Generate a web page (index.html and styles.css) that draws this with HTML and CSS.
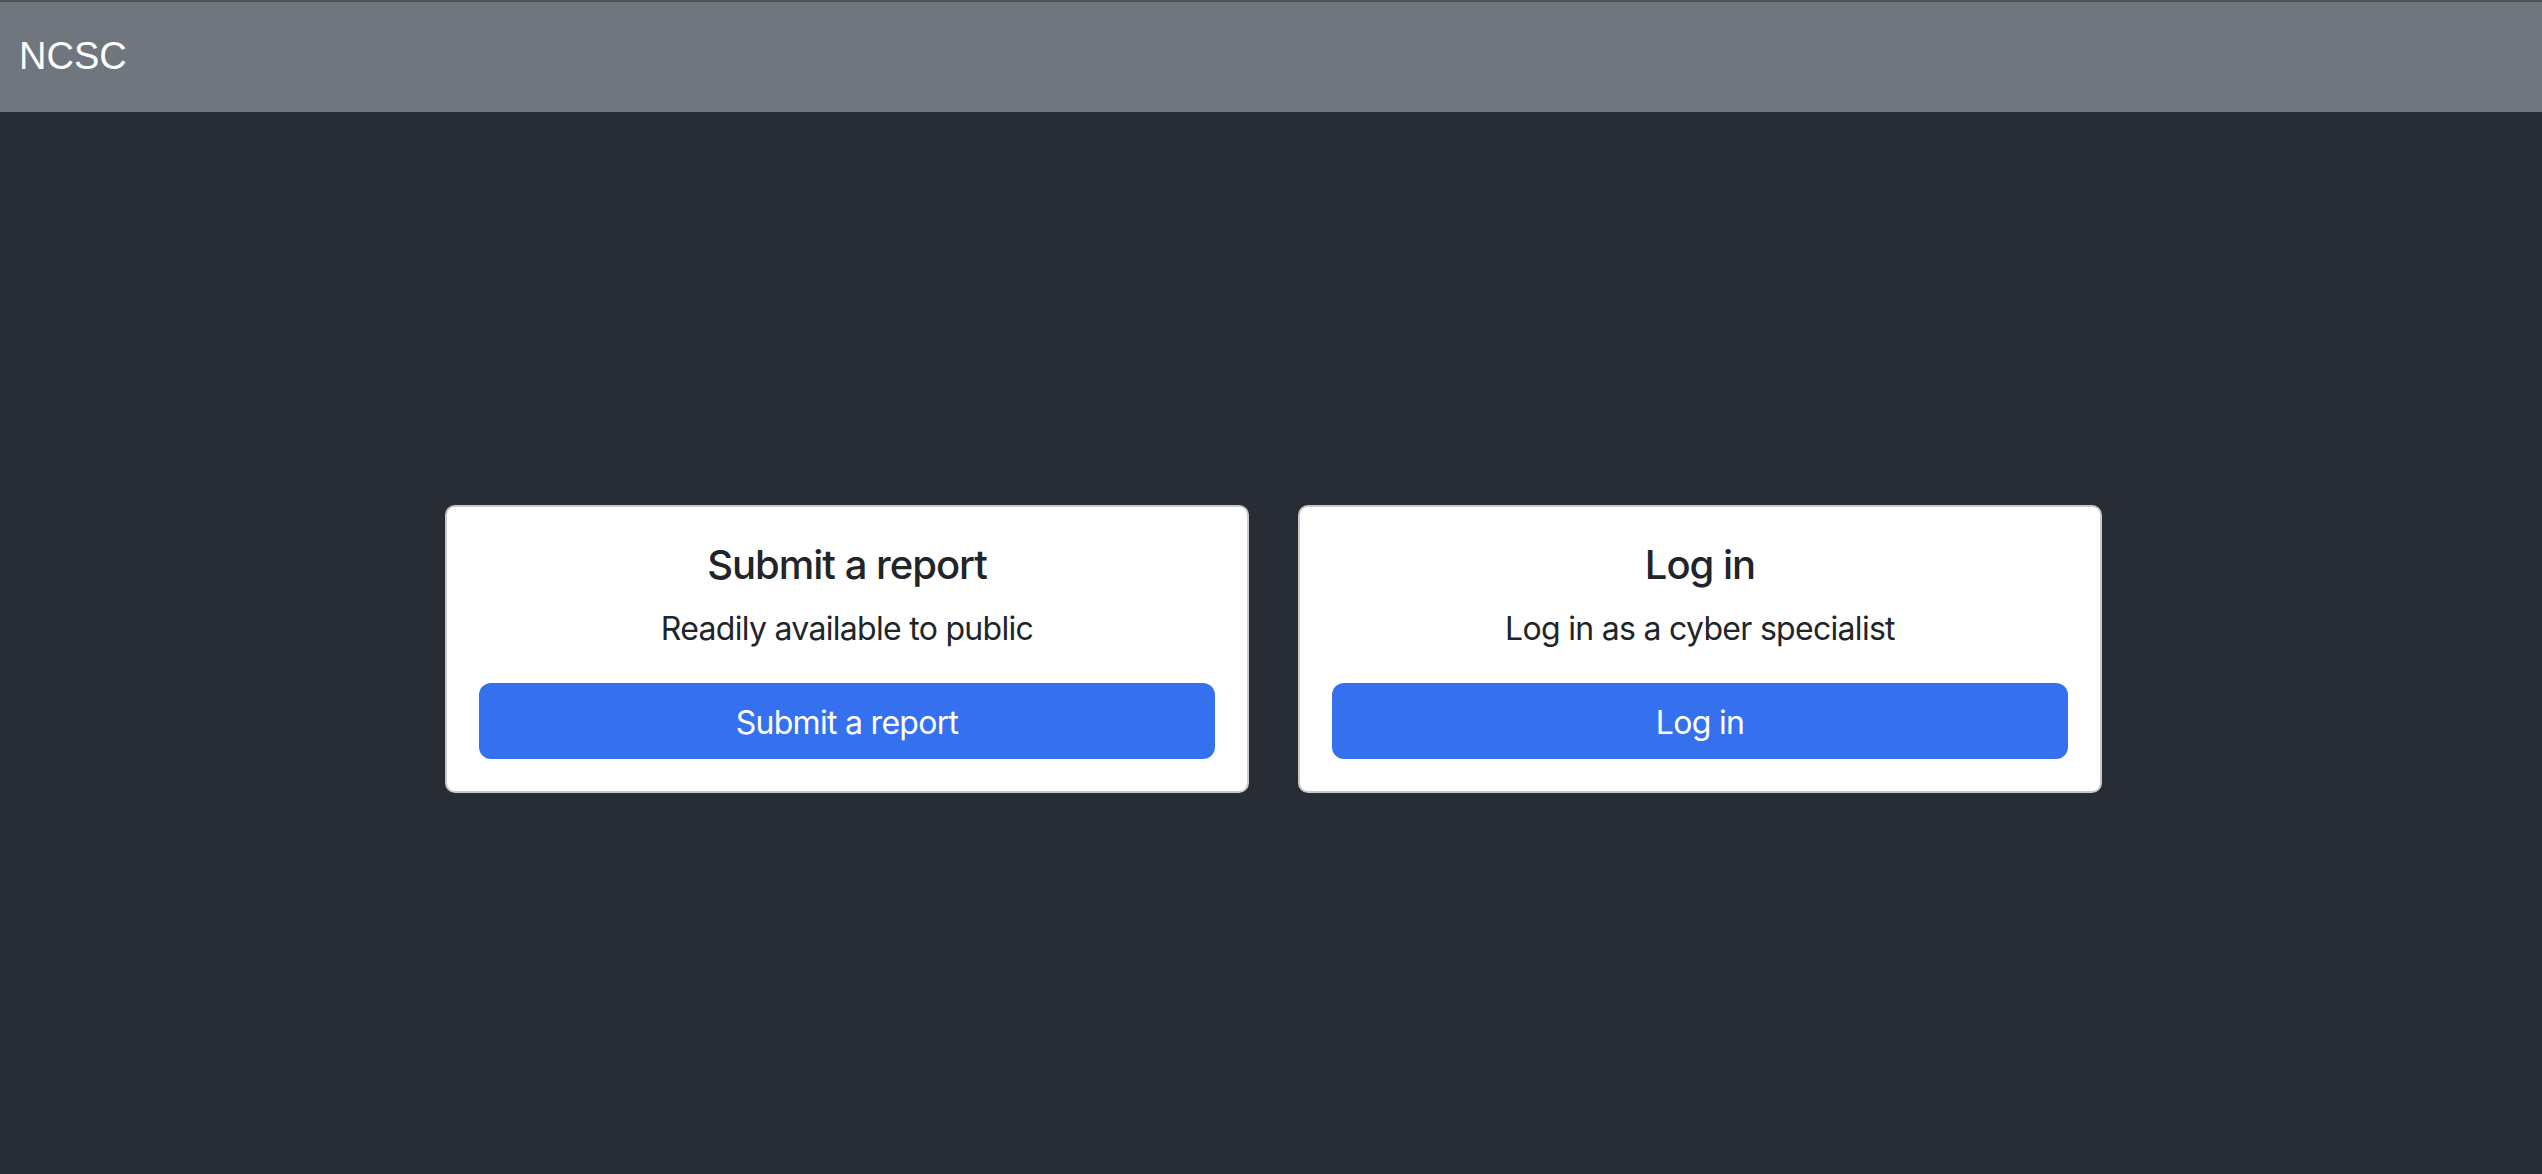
FILE: index.html
```html
<!DOCTYPE html>
<html lang="en">
<head>
<meta charset="utf-8">
<title>NCSC</title>
<link rel="stylesheet" href="styles.css">
</head>
<body>
<nav class="navbar">
  <span class="brand">NCSC</span>
</nav>
<main class="main">
  <div class="cards">
    <section class="card">
      <h5 class="card-title">Submit a report</h5>
      <p class="card-text">Readily available to public</p>
      <button class="btn">Submit a report</button>
    </section>
    <section class="card">
      <h5 class="card-title">Log in</h5>
      <p class="card-text">Log in as a cyber specialist</p>
      <button class="btn">Log in</button>
    </section>
  </div>
</main>
</body>
</html>
```
FILE: styles.css
```css
* { box-sizing: border-box; }
html, body { margin: 0; padding: 0; }
body {
  background: #282c34;
  min-height: 100vh;
  font-family: Inter, "Noto Sans", "Liberation Sans", sans-serif;
  color: #212529;
}
.navbar {
  height: 112px;
  background: #6f767e;
  border-top: 2px solid #4d5259;
  display: flex;
  align-items: center;
  padding: 0 19px;
}
.brand {
  font-family: "Liberation Sans", Arial, sans-serif;
  font-size: 38px;
  color: #ffffff;
  line-height: 1.2;
}
.main {
  padding-top: 393px;
}
.cards {
  display: flex;
  justify-content: center;
  gap: 49px;
  padding-left: 5px;
}
.card {
  width: 804px;
  background: #ffffff;
  border: 2px solid #c9cacc;
  border-radius: 10px;
  padding: 32px;
  text-align: center;
}
.card-title {
  margin: 0 0 16px;
  padding-top: 2px;
  font-size: 40px;
  font-weight: 500;
  line-height: 48px;
  letter-spacing: -0.025em;
}
.card-text {
  margin: 0 0 30px;
  font-size: 32px;
  line-height: 48px;
  letter-spacing: -0.022em;
}
.btn {
  display: block;
  width: 100%;
  height: 76px;
  border: 0;
  border-radius: 12px;
  background: #3571ef;
  color: #ffffff;
  font-family: inherit;
  font-size: 32px;
  line-height: 48px;
  letter-spacing: -0.022em;
  padding: 3px 0 0;
}
```
